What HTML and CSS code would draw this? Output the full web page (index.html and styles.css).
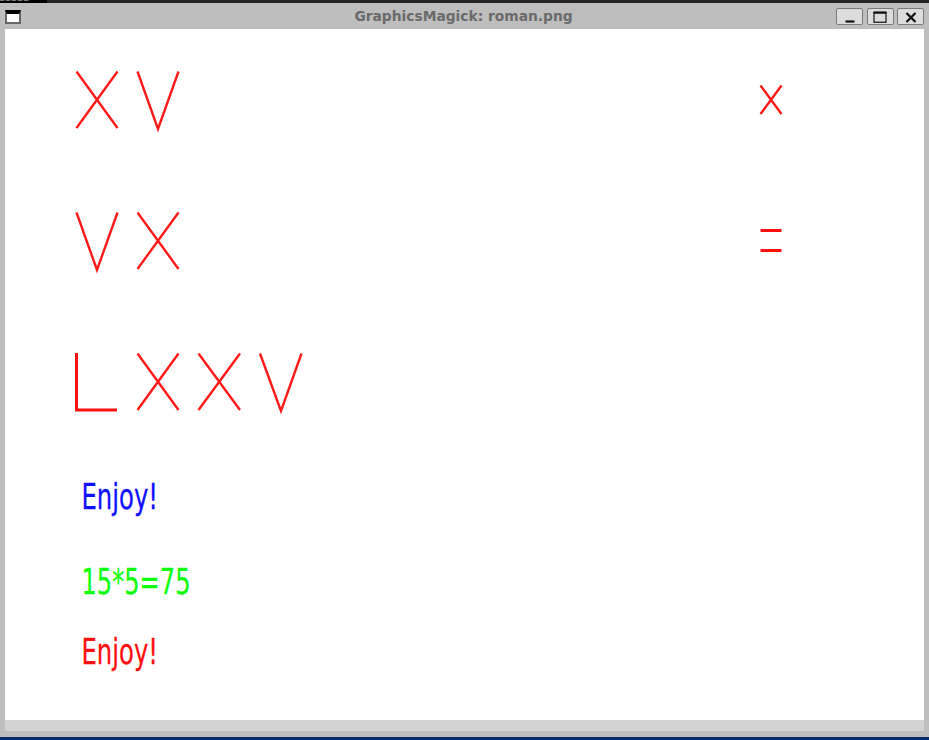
FILE: index.html
```html
<!DOCTYPE html>
<html lang="en">
<head>
    <meta charset="UTF-8">
    <meta name="viewport" content="width=device-width, initial-scale=1.0">
    <title>GraphicsMagick: roman.png</title>
    <link rel="stylesheet" href="styles.css">
</head>
<body>
    <div class="top-strip">
        <div class="top-strip-left"><div class="top-strip-crumbs"></div></div>
        <div class="top-strip-right"></div>
    </div>

    <div class="window">
        <div class="titlebar">
            <div class="menu-icon"></div>
            <div class="title">GraphicsMagick: roman.png</div>
            <div class="buttons">
                <div class="btn">
                    <svg width="12" height="12" viewBox="0 0 12 12"><path class="icon-line" d="M1.5 10.5H10.5"/></svg>
                </div>
                <div class="btn">
                    <svg width="14" height="12" viewBox="0 0 14 12"><path class="icon-thin" d="M1 1.75H13V11.25H1Z"/><path class="icon-line" d="M.5 1.5H13.5"/></svg>
                </div>
                <div class="btn">
                    <svg width="12" height="12" viewBox="0 0 12 12"><path class="icon-line" d="M1.5 2L10.5 11M10.5 2L1.5 11"/></svg>
                </div>
            </div>
        </div>

        <div class="image-area">
            <!-- viewBox is in screen coordinates, the image starts at 5,29 -->
            <svg class="drawing" width="919" height="691" viewBox="5 29 919 691">
                <path class="stroke" d="M76.5 71.5L117.5 128M117.5 71.5L76.5 128"/>
                <path class="stroke" d="M137.5 71.5L158 129L178.5 71.5"/>
                <path class="stroke" d="M760.5 85.5L781.5 114M781.5 85.5L760.5 114"/>

                <path class="stroke" d="M76.5 212.5L97 270L117.5 212.5"/>
                <path class="stroke" d="M137.5 212.5L178.5 269M178.5 212.5L137.5 269"/>
                <path class="stroke thick" d="M760.5 230.5H781.5M760.5 250.5H781.5"/>

                <path class="stroke thick" d="M76.5 353V410H117"/>
                <path class="stroke" d="M137.5 353.5L178.5 410M178.5 353.5L137.5 410"/>
                <path class="stroke" d="M198.5 353.5L240 410M240 353.5L198.5 410"/>
                <path class="stroke" d="M260 353.5L281 411L301.5 353.5"/>

                <text class="label blue" x="81.5" y="509" textLength="76.5" lengthAdjust="spacingAndGlyphs">Enjoy!</text>
                <text class="label green" x="81.5" y="593.5" textLength="109" lengthAdjust="spacingAndGlyphs">15*5=75</text>
                <text class="label red" x="81.5" y="664" textLength="76.5" lengthAdjust="spacingAndGlyphs">Enjoy!</text>
            </svg>
        </div>

        <div class="status"></div>
    </div>

    <div class="taskbar"></div>
</body>
</html>
```

FILE: styles.css
```css
html, body {
    height: 100%;
}

body {
    margin: 0;
    padding: 0;
    background-color: #bebebe;
    display: flex;
    flex-direction: column;
    overflow: hidden;
}

.top-strip {
    height: 3px;
    display: flex;
}

.top-strip-left {
    width: 47px;
    background-color: #000;
}

.top-strip-crumbs {
    width: 30px;
    height: 1px;
    background: repeating-linear-gradient(90deg, #777 0 4px, #222 4px 6px);
}

.top-strip-right {
    flex: 1;
    background-color: #262626;
}

.window {
    flex: 1;
    padding: 0 5px 5px;
    background-color: #bebebe;
}

.titlebar {
    height: 26px;
    position: relative;
    display: flex;
    align-items: center;
    justify-content: space-between;
}

.menu-icon {
    width: 12px;
    height: 8px;
    margin-top: 1px;
    background-color: #fff;
    border: 2px solid #666;
    border-top: 4px solid #000;
}

.title {
    position: absolute;
    left: 0;
    right: 0;
    padding-right: 2px;
    text-align: center;
    font-family: "DejaVu Sans", sans-serif;
    font-weight: bold;
    font-size: 13.8px;
    color: #6a6a6a;
}

.buttons {
    display: flex;
    gap: 3.5px;
    margin-top: 1px;
}

.btn {
    width: 25px;
    height: 15px;
    background-color: #dcdcdc;
    border: 1px solid #7a7a7a;
    border-radius: 2px;
    display: flex;
    align-items: center;
    justify-content: center;
}

.icon-line {
    fill: none;
    stroke: #111;
    stroke-width: 2.2;
}

.icon-thin {
    fill: none;
    stroke: #333;
    stroke-width: 1.4;
}

.image-area {
    height: 691px;
    background-color: #fff;
}

.drawing {
    display: block;
}

.stroke {
    fill: none;
    stroke: #ff1a1a;
    stroke-width: 2.4;
}

.thick {
    stroke: #ff1010;
    stroke-width: 3;
}

.label {
    font-family: "DejaVu Sans", sans-serif;
    font-size: 36px;
    stroke-width: 0.3;
}

.blue {
    fill: #1010ff;
    stroke: #1010ff;
}

.green {
    fill: #10ff10;
    stroke: #10ff10;
}

.red {
    fill: #ff1010;
    stroke: #ff1010;
}

.status {
    height: 11px;
    background-color: #d3d3d3;
}

.taskbar {
    height: 3px;
    background-color: #0c2a6e;
}
```
